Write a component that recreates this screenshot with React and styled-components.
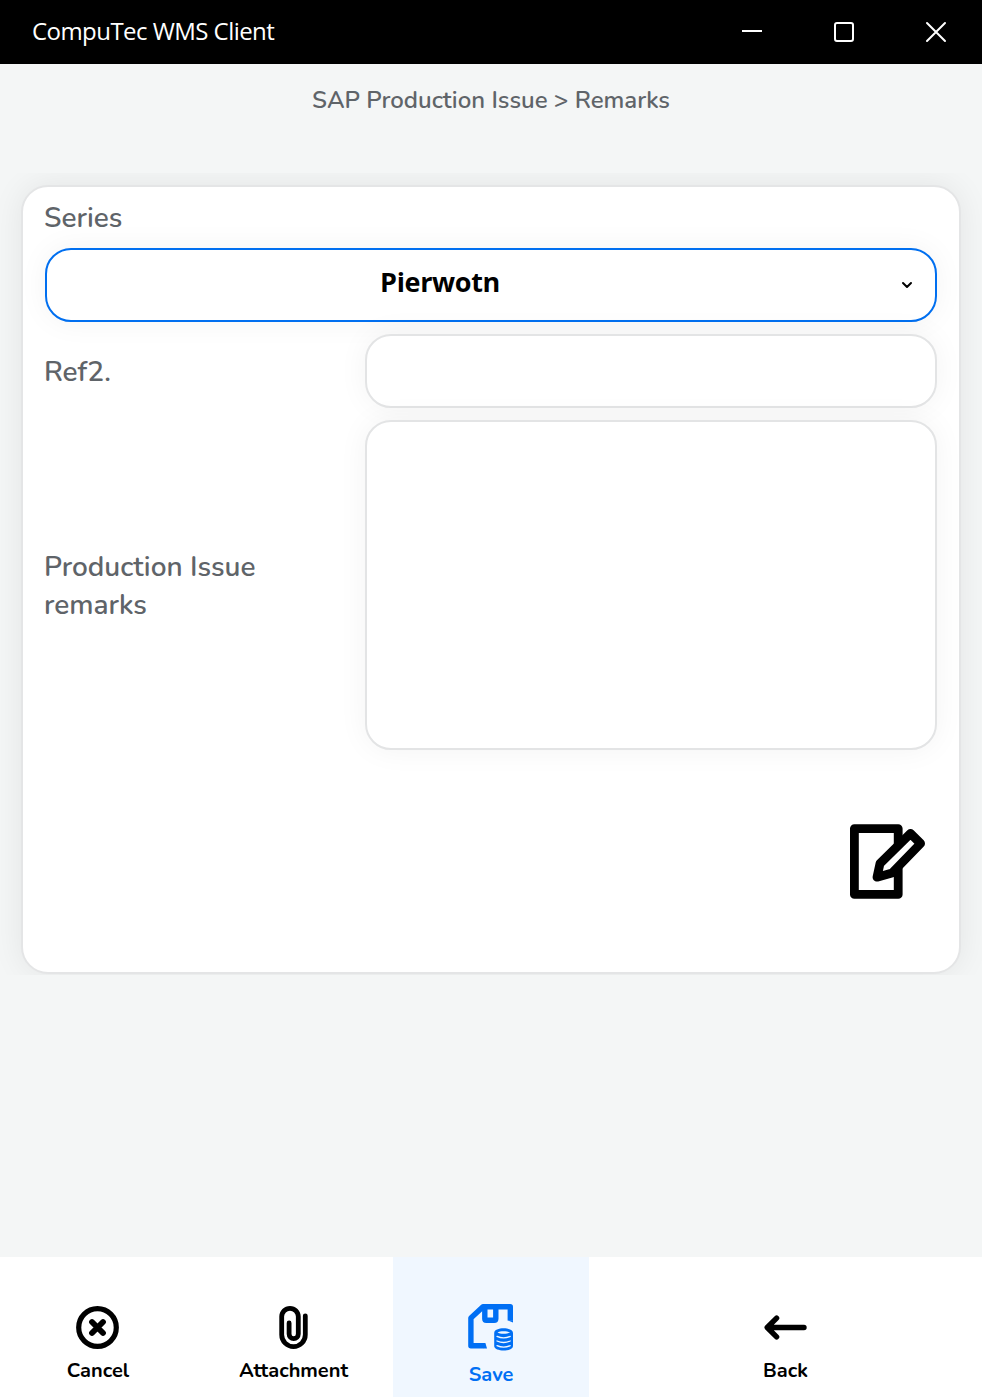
import React from "react";
import styled, { createGlobalStyle } from "styled-components";

const GlobalStyle = createGlobalStyle`
  *, *::before, *::after { box-sizing: border-box; }
  body { margin: 0; background: #f4f6f6; }
  button, input, textarea { font: inherit; }
`;

const uiFont = `"Nunito", "Lato", "Open Sans", sans-serif`;
const systemFont = `"Segoe UI", "Open Sans", "Noto Sans", sans-serif`;

const Window = styled.div`
  display: flex;
  flex-direction: column;
  height: 1397px;
  width: 982px;
  background: #f4f6f6;
  font-family: ${uiFont};
  overflow: hidden;
`;

const TitleBar = styled.header`
  display: flex;
  flex: none;
  align-items: center;
  justify-content: space-between;
  height: 64px;
  padding-left: 32px;
  background: #000;
  color: #fff;
`;

const Title = styled.span`
  margin-top: -2px;
  font-family: ${systemFont};
  font-size: 24px;
  line-height: 32px;
  letter-spacing: -0.55px;
  white-space: nowrap;
`;

const WindowControls = styled.div`
  display: flex;
`;

const WindowButton = styled.button`
  display: grid;
  place-items: center;
  width: 92px;
  height: 64px;
  padding: 0;
  border: 0;
  background: none;
  color: #fff;
`;

const Breadcrumb = styled.nav`
  flex: none;
  height: 109px;
  padding-top: 20px;
  color: #5f6469;
  font-size: 24px;
  font-weight: 600;
  line-height: 32px;
  text-align: center;
  white-space: nowrap;
`;

const CardArea = styled.main`
  flex: none;
  height: 802px;
  padding: 12px 21px 0;
  overflow: hidden;
`;

const Card = styled.section`
  display: flex;
  flex-direction: column;
  height: 789px;
  padding: 12px 22px 0;
  border: 2px solid #e4e5e6;
  border-radius: 27px;
  background: #fff;
  box-shadow: 0 0 32px rgba(0, 0, 0, 0.075);
`;

const Label = styled.label`
  margin-left: -1px;
  padding-top: ${(p) => (p.htmlFor ? "2px" : "0")};
  color: #5f6469;
  font-size: 28px;
  font-weight: 600;
  line-height: 38px;
`;

const Select = styled.button`
  display: flex;
  flex: none;
  align-items: center;
  width: 100%;
  height: 74px;
  margin-top: 11px;
  padding: 0 23px 0 0;
  border: 2px solid #006ff0;
  border-radius: 26px;
  background: #fff;
  color: #000;
  box-shadow: 0 0 30px rgba(0, 0, 0, 0.05);
`;

const SelectValue = styled.span`
  flex: 1;
  padding: 0 69px 6px 0;
  font-family: ${systemFont};
  font-size: 27px;
  font-weight: 700;
  line-height: 36px;
  letter-spacing: -0.35px;
`;

const FieldRow = styled.div`
  display: grid;
  grid-template-columns: 320px 1fr;
  align-items: center;
  margin-top: 12px;
`;

const fieldBox = `
  display: block;
  width: 100%;
  padding: 16px 24px;
  border: 2px solid #e3e4e5;
  border-radius: 26px;
  background: #fff;
  outline: none;
  resize: none;
  box-shadow: 0 0 30px rgba(0, 0, 0, 0.05);
`;

const TextInput = styled.input`
  ${fieldBox}
  height: 74px;
`;

const TextArea = styled.textarea`
  ${fieldBox}
  height: 330px;
`;

const EditButton = styled.button`
  align-self: flex-end;
  width: 76px;
  height: 76px;
  margin: 74px 11px 0 0;
  padding: 0;
  border: 0;
  background: none;
  color: #000;
`;

const Footer = styled.footer`
  display: grid;
  grid-template-columns: 393px 196px 393px;
  height: 140px;
  margin-top: auto;
  background: #fff;
`;

const ActionPair = styled.div`
  display: grid;
  grid-template-columns: 196px 195px;
`;

const Action = styled.button`
  display: flex;
  flex-direction: column;
  align-items: center;
  padding: ${(p) => (p.$active ? "46px" : "47px")} 0 0;
  border: 0;
  background: ${(p) => (p.$active ? "#f0f7ff" : "#fff")};
  color: ${(p) => (p.$active ? "#006ff4" : "#000")};
`;

const ActionIcon = styled.span`
  display: grid;
  place-items: center;
  height: ${(p) => (p.$active ? "48px" : "46px")};
`;

const ActionLabel = styled.span`
  margin-top: ${(p) => (p.$active ? "12px" : "9px")};
  font-size: 20px;
  font-weight: 700;
  line-height: 24px;
  white-space: nowrap;
`;

const Svg = styled.svg`
  display: block;
  overflow: visible;
`;

const MinimizeIcon = () => (
  <Svg width="20" height="20" viewBox="0 0 20 20" stroke="currentColor" strokeWidth="2">
    <path d="M0 9H20" />
  </Svg>
);

const MaximizeIcon = () => (
  <Svg width="20" height="20" viewBox="0 0 20 20" fill="none" stroke="currentColor" strokeWidth="2">
    <rect x="1" y="1" width="18" height="18" rx="2" />
  </Svg>
);

const CloseIcon = () => (
  <Svg width="20" height="20" viewBox="0 0 20 20" stroke="currentColor" strokeWidth="2" strokeLinecap="round">
    <path d="M1 1L19 19M19 1L1 19" />
  </Svg>
);

const ChevronIcon = () => (
  <Svg width="10" height="6" viewBox="0 0 10 6" fill="none" stroke="currentColor" strokeWidth="2" strokeLinecap="round" strokeLinejoin="round">
    <path d="M1 1L5 5L9 1" />
  </Svg>
);

const EditIcon = () => (
  <Svg width="76" height="76" viewBox="0 0 76 76" fill="none" stroke="currentColor" strokeWidth="8.8" strokeLinejoin="round">
    <path d="M4.4 4.6H48.2V70.4H4.4Z" />
    <path d="M60.5 9.5L70.6 19.5L42 49L27 53.2L30 39.5Z" fill="#fff" />
  </Svg>
);

const CancelIcon = () => (
  <Svg width="44" height="44" viewBox="0 0 44 44" fill="none" stroke="currentColor" strokeWidth="5.2" strokeLinecap="round">
    <circle cx="21.5" cy="22.5" r="18.8" />
    <path d="M16 17L27 28M27 17L16 28" strokeWidth="5.8" />
  </Svg>
);

const AttachmentIcon = () => (
  <Svg width="30" height="44" viewBox="0 0 30 44" fill="none" stroke="currentColor" strokeWidth="4.8" strokeLinecap="round">
    <path d="M26.3 10.8V29.8A11.8 11.8 0 0 1 2.7 29.8V11.6A8.3 8.3 0 0 1 19.3 11.6V29A4.6 4.6 0 0 1 10.1 29V18" />
  </Svg>
);

const SaveIcon = () => (
  <Svg width="46" height="48" viewBox="0 0 46 48" fill="none" stroke="currentColor" strokeWidth="5.4" strokeLinejoin="round">
    <path d="M16 42.8H2.9V15L15 3.7H42.3V17.5" />
    <path d="M16.8 4V15.8Q16.8 17.3 18.3 17.3H26.2Q27.8 17.3 27.8 15.8V4" />
    <path d="M39.6 17.3L45 19.4V17.3Z" fill="currentColor" stroke="none" />
    <path d="M15.8 40.1H17.4L19 45.5H15.8Z" fill="currentColor" stroke="none" />
    <path d="M26.2 30C26.2 23.8 45 23.8 45 30V43C45 49 26.2 49 26.2 43Z" fill="currentColor" stroke="none" />
    <path d="M29.5 29.5C32 27.8 39 27.8 41.8 29.5C39 31.2 32 31.2 29.5 29.5Z" fill="#f0f7ff" stroke="none" />
    <path d="M29 33.4Q35.6 36.4 42.2 33.4M29 38Q35.6 41 42.2 38M29 42.7Q35.6 45.7 42.2 42.7" stroke="#f0f7ff" strokeWidth="1.3" strokeLinecap="round" />
  </Svg>
);

const BackIcon = () => (
  <Svg width="44" height="26" viewBox="0 0 44 26" fill="none" stroke="currentColor" strokeWidth="5.4" strokeLinecap="round" strokeLinejoin="round">
    <path d="M40 13.5H3.4M12.6 4.2L3.2 13.5L12.6 22.8" />
  </Svg>
);

export default function App() {
  return (
    <Window>
      <GlobalStyle />
      <TitleBar>
        <Title>CompuTec WMS Client</Title>
        <WindowControls>
          <WindowButton aria-label="Minimize"><MinimizeIcon /></WindowButton>
          <WindowButton aria-label="Maximize"><MaximizeIcon /></WindowButton>
          <WindowButton aria-label="Close"><CloseIcon /></WindowButton>
        </WindowControls>
      </TitleBar>
      <Breadcrumb>SAP Production Issue &gt; Remarks</Breadcrumb>
      <CardArea>
        <Card>
          <Label>Series</Label>
          <Select>
            <SelectValue>Pierwotn</SelectValue>
            <ChevronIcon />
          </Select>
          <FieldRow>
            <Label htmlFor="ref2">Ref2.</Label>
            <TextInput id="ref2" />
          </FieldRow>
          <FieldRow>
            <Label htmlFor="remarks">Production Issue<br />remarks</Label>
            <TextArea id="remarks" />
          </FieldRow>
          <EditButton aria-label="Edit"><EditIcon /></EditButton>
        </Card>
      </CardArea>
      <Footer>
        <ActionPair>
          <Action>
            <ActionIcon><CancelIcon /></ActionIcon>
            <ActionLabel>Cancel</ActionLabel>
          </Action>
          <Action>
            <ActionIcon><AttachmentIcon /></ActionIcon>
            <ActionLabel>Attachment</ActionLabel>
          </Action>
        </ActionPair>
        <Action $active>
          <ActionIcon $active><SaveIcon /></ActionIcon>
          <ActionLabel $active>Save</ActionLabel>
        </Action>
        <Action>
          <ActionIcon><BackIcon /></ActionIcon>
          <ActionLabel>Back</ActionLabel>
        </Action>
      </Footer>
    </Window>
  );
}
